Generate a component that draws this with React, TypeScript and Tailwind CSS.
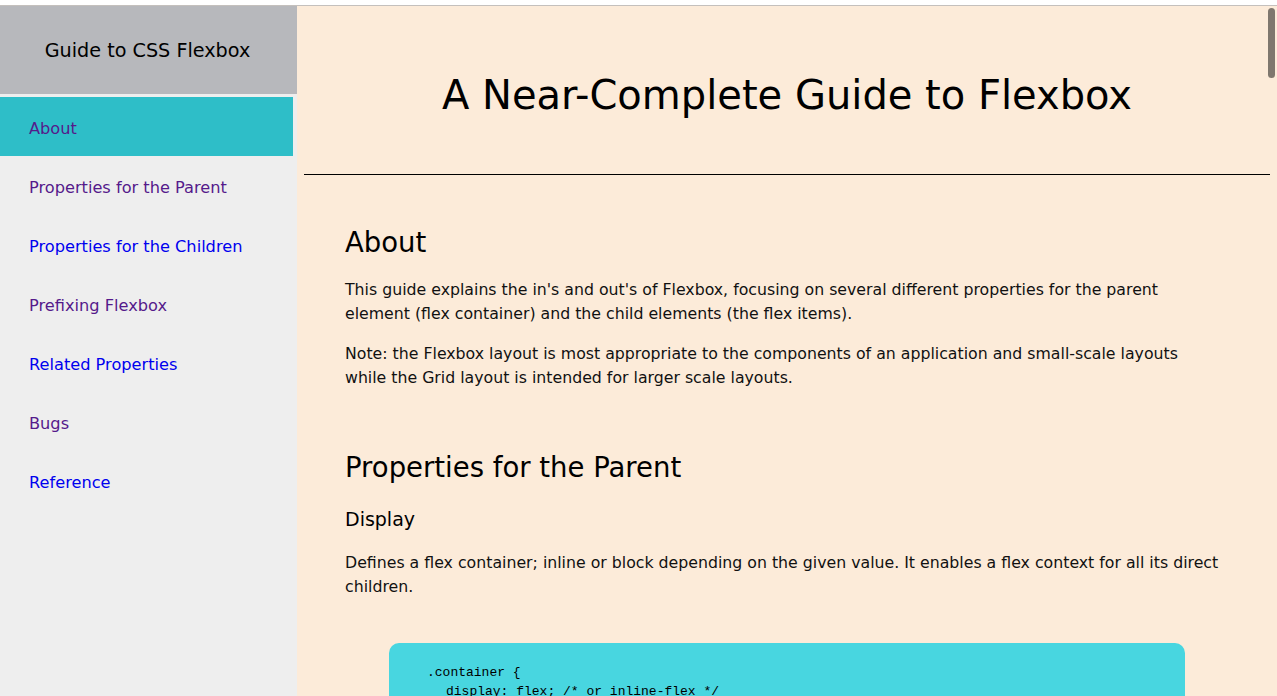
import React from 'react';

const navItems = [
    { label: 'About', visited: true, active: true },
    { label: 'Properties for the Parent', visited: true },
    { label: 'Properties for the Children', visited: false },
    { label: 'Prefixing Flexbox', visited: true },
    { label: 'Related Properties', visited: false },
    { label: 'Bugs', visited: true },
    { label: 'Reference', visited: false },
];

export default function App() {
    return (
        <div className="h-[696px] w-full overflow-hidden bg-white flex flex-col font-['DejaVu_Sans',sans-serif] text-[#111]">
            <div className="h-[5px] bg-white" />
            <div className="h-px bg-[#c4c0bd]" />

            <div className="flex flex-1 min-h-0">
                {/* sidebar */}
                <aside className="w-[297px] shrink-0 bg-[#eeeeee] flex flex-col">
                    <div className="h-[88px] bg-[#b7b8bc] flex items-center justify-center pt-[2px] pr-[2px] text-[19.2px] text-black">
                        Guide to CSS Flexbox
                    </div>
                    <nav className="mt-[3px] flex flex-col">
                        {navItems.map((item) => (
                            <a
                                key={item.label}
                                href="#"
                                className={
                                    'h-[59px] w-[293px] flex items-center pl-[29px] pt-[6px] text-[16.2px] ' +
                                    (item.active ? 'bg-[#2ebec8] ' : '') +
                                    (item.visited ? 'text-[#551a8b]' : 'text-[#0000ee]')
                                }
                            >
                                {item.label}
                            </a>
                        ))}
                    </nav>
                </aside>

                {/* main */}
                <main className="relative flex-1 bg-[#fcebd9] overflow-hidden">
                    <div className="absolute top-[2px] right-[2px] w-[7px] h-[70px] rounded-full bg-[#7f776e]" />

                    <header className="h-[168px] flex items-center justify-center pt-[10px]">
                        <h1 className="text-[40px] text-black">A Near-Complete Guide to Flexbox</h1>
                    </header>
                    <hr className="mx-[7px] border-t border-black" />

                    <div className="pl-[48px] pr-[56px] pt-[50px] text-[15.75px] leading-[24px]">
                        <section>
                            <h2 className="text-[27.5px] leading-[34px] text-black">About</h2>
                            <p className="mt-[19px]">
                                This guide explains the in's and out's of Flexbox, focusing on several different properties for the parent element (flex container) and the child elements (the flex items).
                            </p>
                            <p className="mt-[16px]">
                                Note: the Flexbox layout is most appropriate to the components of an application and small-scale layouts while the Grid layout is intended for larger scale layouts.
                            </p>
                        </section>

                        <section className="mt-[60px]">
                            <h2 className="text-[27.5px] leading-[34px] text-black">Properties for the Parent</h2>
                            <h3 className="mt-[24px] text-[19px] leading-[23px] text-black">Display</h3>
                            <p className="mt-[20px]">
                                Defines a flex container; inline or block depending on the given value. It enables a flex context for all its direct children.
                            </p>
                            <pre className="mt-[44px] ml-[44px] w-[796px] rounded-[10px] bg-[#48d6e0] pt-[20px] pb-[18px] pl-[38px] font-['Liberation_Mono',monospace] text-[13px] leading-[19px] text-black">
                                <div>.container {'{'}</div>
                                <div className="pl-[19px]">display: flex; /* or inline-flex */</div>
                                <div>{'}'}</div>
                            </pre>
                        </section>
                    </div>
                </main>
            </div>
        </div>
    );
}
